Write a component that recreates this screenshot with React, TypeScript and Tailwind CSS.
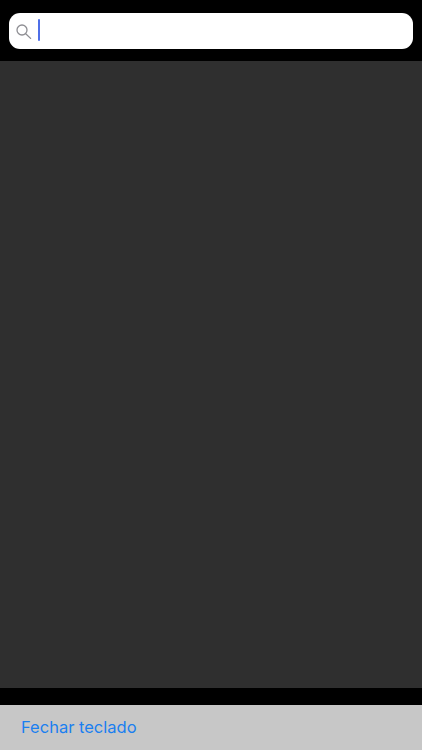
export default function App() {
  return (
    <div className="flex h-[750px] w-[422px] flex-col overflow-hidden bg-black font-['Inter','Liberation_Sans',sans-serif]">
      <div className="h-[61px] px-[9px] pt-[13px]">
        <div className="flex h-[36px] items-start rounded-[11px] bg-white pl-[7px]">
          <svg className="mt-[11px]" width="16" height="15" viewBox="0 0 16 15" fill="none" stroke="#8e8e93" strokeWidth="1.3" strokeLinecap="round">
            <circle cx="6" cy="6" r="5" />
            <path d="M9.7 9.7 14.6 14.4" />
          </svg>
          <span className="ml-[6px] mt-[6px] h-[22px] w-[2px] rounded-full bg-[#4f6fe8]" />
        </div>
      </div>
      <div className="h-[627px] bg-[#2f2f2f]" />
      <div className="h-[17px] bg-black" />
      <div className="flex h-[45px] items-center bg-[#c7c7c7] pl-[21px]">
        <button className="text-[16.5px] leading-none text-[#1a7ff0]">Fechar teclado</button>
      </div>
    </div>
  );
}
